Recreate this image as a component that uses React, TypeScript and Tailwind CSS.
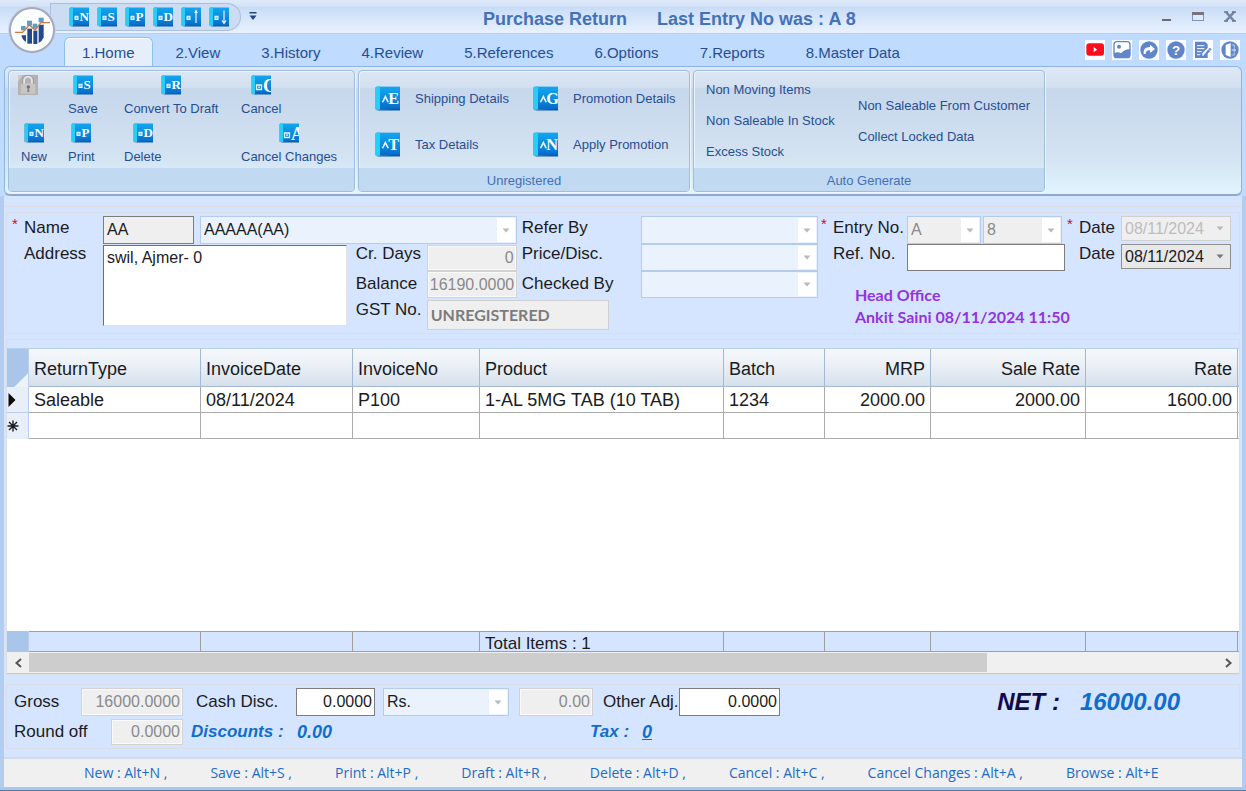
import type { ReactNode } from "react";
import { clsx } from "clsx";

const tabs = [
  "1.Home",
  "2.View",
  "3.History",
  "4.Review",
  "5.References",
  "6.Options",
  "7.Reports",
  "8.Master Data",
];

const shortcuts = [
  "New : Alt+N ,",
  "Save : Alt+S ,",
  "Print : Alt+P ,",
  "Draft : Alt+R ,",
  "Delete : Alt+D ,",
  "Cancel : Alt+C ,",
  "Cancel Changes : Alt+A ,",
  "Browse : Alt+E",
];

const columns = [
  { title: "ReturnType", value: "Saleable", width: "w-[172px]" },
  { title: "InvoiceDate", value: "08/11/2024", width: "w-[152px]" },
  { title: "InvoiceNo", value: "P100", width: "w-[127px]" },
  { title: "Product", value: "1-AL 5MG TAB (10 TAB)", width: "" },
  { title: "Batch", value: "1234", width: "w-[101px]" },
  { title: "MRP", value: "2000.00", width: "w-[106px]", numeric: true },
  { title: "Sale Rate", value: "2000.00", width: "w-[155px]", numeric: true },
  { title: "Rate", value: "1600.00", width: "w-[152px]", numeric: true },
];

interface BookIconProps {
  letter: string;
  caret?: boolean;
  large?: boolean;
  className?: string;
}

function BookIcon({ letter, caret, large, className = "size-5" }: BookIconProps) {
  return (
    <svg viewBox="0 0 20 20" className={clsx("shrink-0", className)} aria-hidden="true">
      <defs>
        <linearGradient id="cover" x1="0" y1="0" x2="0" y2="1">
          <stop offset="0" stopColor="#12a6ee" />
          <stop offset="0.6" stopColor="#0b87dd" />
          <stop offset="1" stopColor="#0667c4" />
        </linearGradient>
      </defs>
      <rect x="1" y="0.5" width="19" height="18.5" fill="url(#cover)" />
      <path d="M0.5 1 L4 0 V19 H0.5 Z" fill="#25cdf7" />
      <path d="M0.3 1 V18.5" stroke="#5aa0c8" strokeWidth="0.6" />
      <path d="M4 19 L20 18 V19.5 H1 Z" fill="#0a5cab" />
      {caret ? (
        <path d="M6 13 L8.3 8.5 L10.6 13" fill="none" stroke="#e8f6ff" strokeWidth="1.3" />
      ) : large ? (
        <path d="M5.5 10 h5 v4.5 h-5 z M7 12.2 h2" fill="none" stroke="#e8f6ff" strokeWidth="1.3" />
      ) : (
        <path d="M6 9.2 h3 v3.3 h-3 z" fill="#7fc8f5" stroke="#e8f6ff" strokeWidth="1.1" />
      )}
      {letter === "up" && (
        <path d="M15 3.5 V16 M13.8 6 L15 3.5 L16.2 6" fill="none" stroke="#fff" strokeWidth="1.1" />
      )}
      {letter === "down" && (
        <path d="M15 3.5 V15 M13 13.5 L15 16.5 L17 13.5" fill="none" stroke="#fff" strokeWidth="1.1" />
      )}
      {letter.length === 1 && (
        <text
          x={large ? 12 : 10.5}
          y={large ? 17 : 14}
          fill="#fff"
          className={clsx(
            "font-['Liberation_Serif',serif] font-bold",
            large ? "text-[18px]" : "text-[13px]"
          )}
        >
          {letter}
        </text>
      )}
    </svg>
  );
}

function AppLogo() {
  return (
    <svg viewBox="27 21 138 138" className="size-[46px] shrink-0" aria-hidden="true">
      <g fill="#24488c">
        <path d="M65 106 h13 v20 q-8 -4 -13 -16 z" />
        <rect x="82" y="86" width="14" height="45" />
        <rect x="100" y="92" width="12" height="40" />
        <path d="M116 74 h15 v38 q-4 11 -15 17 z" />
      </g>
      <g fill="#5f9fc4">
        <rect x="63" y="78" width="14" height="13" />
        <rect x="81" y="62" width="15" height="15" />
        <rect x="98" y="71" width="14" height="15" />
        <rect x="116" y="53" width="15" height="14" />
      </g>
      <path d="M45 97 H68 L88 75 L105 90 L123 68 H150" fill="none" stroke="#cf7a45" strokeWidth="4" />
    </svg>
  );
}

function UtilityButton({ label, children }: { label: string; children: ReactNode }) {
  return (
    <button type="button" aria-label={label} className="size-5 bg-white/90">
      <svg viewBox="0 0 60 60" className="size-5" fill="#5f86ca">
        {children}
      </svg>
    </button>
  );
}

function UtilityBar() {
  return (
    <div className="flex gap-[7px] self-center">
      <UtilityButton label="Video">
        <rect x="4" y="10" width="53" height="37" rx="9" fill="#fb0d1b" />
        <path d="M26 21 L37 29 L26 36 Z" fill="#fff" />
      </UtilityButton>
      <UtilityButton label="Picture">
        <rect x="6" y="5" width="48" height="48" rx="9" fill="#fff" stroke="#5f86ca" strokeWidth="4" />
        <circle cx="21" cy="20" r="6" />
        <path d="M6 40 Q18 34 27 40 Q40 26 54 28 V46 Q54 54 45 54 H14 Q6 54 6 46 Z" />
      </UtilityButton>
      <UtilityButton label="Share">
        <circle cx="30" cy="30" r="26" />
        <path d="M14 42 Q11 21 33 21 V14 L48 27 L33 39 V31 Q20 30 20 42 Z" fill="#fff" />
      </UtilityButton>
      <UtilityButton label="Help">
        <circle cx="30" cy="30" r="26" />
        <text
          x="30"
          y="44"
          textAnchor="middle"
          fill="#fff"
          className="font-['Liberation_Sans',sans-serif] text-[40px] font-bold"
        >
          ?
        </text>
      </UtilityButton>
      <UtilityButton label="Notes">
        <path d="M6 5 H36 L44 13 V24 L28 40 V47 H36 L44 42 V54 H6 Z" />
        <path d="M12 17 H34 M12 26 H34 M12 35 H26 M12 44 H22" stroke="#fff" strokeWidth="3" />
        <path d="M33 44 L50 23 L56 28 L39 47 L31 49 Z" />
        <path d="M46 28 L52 33" stroke="#fff" strokeWidth="2" />
      </UtilityButton>
      <UtilityButton label="Exit">
        <circle cx="30" cy="30" r="26" />
        <path d="M17 15 L32 9 V51 L17 45 Z" fill="#fff" />
        <path d="M35 15 H43 V23 M43 37 V45 H35" fill="none" stroke="#b9cdec" strokeWidth="3" />
        <path d="M35 30 H46 M41 25 L47 30 L41 35" fill="none" stroke="#dfe9f8" strokeWidth="3" />
      </UtilityButton>
    </div>
  );
}

function TitleBar() {
  const quick = ["N", "S", "P", "D", "up", "down"];
  return (
    <header className="relative flex h-[33px] items-center bg-[linear-gradient(#dfeafb_0,#d5e3f8_6px,#c9dcf6_7px,#e7f1ff_32px)]">
      <button
        type="button"
        aria-label="Application menu"
        className="absolute top-[7px] left-[9px] z-10 flex size-[46px] items-center justify-center rounded-full border-2 border-[#a3abbc] bg-[#fcfdff] shadow-[inset_0_0_0_1px_#fff,0_0_0_1px_#c9d6ea]"
      >
        <AppLogo />
      </button>
      <div className="ml-[50px] flex h-[28px] items-center gap-2 rounded-tl-lg rounded-r-full border border-[#a9bfe0] bg-[#cbdcf3] pr-[11px] pl-[18px]">
        {quick.map((letter) => (
          <button type="button" key={letter} aria-label={letter}>
            <BookIcon letter={letter} />
          </button>
        ))}
      </div>
      <button type="button" aria-label="Customize toolbar" className="ml-2">
        <svg viewBox="0 0 8 9" className="h-[9px] w-2" fill="#1f4687">
          <rect x="0.5" y="0" width="7" height="1.5" />
          <path d="M0.5 3.5 H7.5 L4 8 Z" />
        </svg>
      </button>
      <h1 className="ml-[226px] pt-1 text-lg font-bold whitespace-pre text-[#4472b9]">
        Purchase Return{"      "}Last Entry No was : A 8
      </h1>
      <div className="mr-[10px] ml-auto flex items-center gap-5">
        <button type="button" aria-label="Minimize">
          <svg viewBox="0 0 11 11" className="size-[11px]">
            <rect x="1" y="8" width="9" height="2" fill="#6b6b70" />
          </svg>
        </button>
        <button type="button" aria-label="Maximize">
          <svg viewBox="0 0 12 11" className="h-[11px] w-3">
            <rect x="0.5" y="1.5" width="11" height="8" fill="#dfe9f8" stroke="#7d95bd" />
            <rect x="0" y="1" width="12" height="3" fill="#77747f" />
          </svg>
        </button>
        <button type="button" aria-label="Close">
          <svg viewBox="0 0 12 11" className="h-[11px] w-3">
            <path d="M2 1 L10 10 M10 1 L2 10" stroke="#7186ab" strokeWidth="2.6" />
            <path d="M0 1 H4 M8 1 H12 M0 10 H4 M8 10 H12" stroke="#75757f" strokeWidth="1.4" />
          </svg>
        </button>
      </div>
    </header>
  );
}

function TabStrip() {
  return (
    <nav className="flex h-[33px] items-end border-t border-[#b3d0f8] bg-[#bfdbff] pr-[6px] pl-[64px] text-[15px] text-[#274e92]">
      <div className="flex flex-1 items-end gap-[5px]">
        {tabs.map((tab, i) => (
          <button
            type="button"
            key={tab}
            className={clsx(
              "h-[29px] border border-b-0 px-[17px] pt-[3px]",
              i === 0
                ? "rounded-t-md border-[#8fc0ee] bg-[#e6eefa] shadow-[inset_0_1px_0_#fff]"
                : "border-transparent"
            )}
          >
            {tab}
          </button>
        ))}
      </div>
      <UtilityBar />
    </nav>
  );
}

function RibbonGroup({
  caption,
  className,
  children,
}: {
  caption?: string;
  className: string;
  children: ReactNode;
}) {
  return (
    <section
      className={clsx(
        "flex flex-col overflow-hidden rounded border border-[#9fbddd] shadow-[1px_1px_0_#eef6fd,inset_1px_1px_0_#eaf2fb]",
        className
      )}
    >
      <div className="flex-1">{children}</div>
      <div className="h-[23px] bg-[#c1d9f1] pt-px text-center text-[13px] leading-6 text-[#4470b3]">{caption}</div>
    </section>
  );
}

function CommandButton({ letter, label, large }: { letter: string; label: string; large?: boolean }) {
  return (
    <button type="button" className="flex flex-col items-center gap-1 justify-self-start leading-5">
      <BookIcon letter={letter} large={large} />
      {label}
    </button>
  );
}

function DetailButton({ letter, label }: { letter: string; label: string }) {
  return (
    <button type="button" className="flex items-center gap-[15px]">
      <BookIcon letter={letter} caret className="size-[25px]" />
      {label}
    </button>
  );
}

function Ribbon() {
  return (
    <div className="mx-1 flex h-[130px] gap-[3px] rounded-md border border-b-2 border-[#8db4e3] border-b-[#8fa9cd] bg-[linear-gradient(#dfe8f5_0,#d3e0f0_20px,#c7d7ec_22px,#d3e3f2_90px,#e1f4fe_126px)] pt-[3px] pr-1 pb-[2px] pl-[3px] text-[13px] text-[#274e92]">
      <RibbonGroup className="w-[347px]">
        <div className="grid grid-cols-[47px_56px_117px_auto] gap-y-1 pt-1 pl-3">
          <button type="button" aria-label="Lock" className="ml-[-3px] size-5">
            <svg viewBox="0 0 60 60" className="size-5">
              <rect width="60" height="60" fill="#b4b2b0" />
              <path d="M0 60 V20 L14 0 H0 Z" fill="#cfcdca" />
              <path d="M18 28 V16 Q18 5 30 5 Q42 5 42 16 V28" fill="none" stroke="#e4e4e4" strokeWidth="6" />
              <path d="M14 28 V14 Q18 1 30 1 Q42 1 46 14 V28" fill="none" stroke="#8c8c8c" strokeWidth="2" />
              <path d="M8 28 Q30 22 52 28 V56 H8 Z" fill="#c8c6c4" />
              <circle cx="31" cy="36" r="5" fill="#6d6d6d" />
              <path d="M29 38 H33 L35 51 H27 Z" fill="#8a8a8a" />
            </svg>
          </button>
          <CommandButton letter="S" label="Save" />
          <CommandButton letter="R" label="Convert To Draft" />
          <CommandButton letter="C" label="Cancel" large />
          <CommandButton letter="N" label="New" />
          <CommandButton letter="P" label="Print" />
          <CommandButton letter="D" label="Delete" />
          <CommandButton letter="A" label="Cancel Changes" large />
        </div>
      </RibbonGroup>
      <RibbonGroup caption="Unregistered" className="w-[332px]">
        <div className="grid grid-cols-[158px_auto] justify-start gap-y-[21px] pt-[15px] pl-4">
          <DetailButton letter="E" label="Shipping Details" />
          <DetailButton letter="G" label="Promotion Details" />
          <DetailButton letter="T" label="Tax Details" />
          <DetailButton letter="N" label="Apply Promotion" />
        </div>
      </RibbonGroup>
      <RibbonGroup caption="Auto Generate" className="w-[352px]">
        <div className="flex pl-3 leading-5">
          <div className="flex w-[152px] flex-col items-start gap-[11px] pt-[9px]">
            <button type="button">Non Moving Items</button>
            <button type="button">Non Saleable In Stock</button>
            <button type="button">Excess Stock</button>
          </div>
          <div className="flex flex-col items-start gap-[11px] pt-[25px]">
            <button type="button">Non Saleable From Customer</button>
            <button type="button">Collect Locked Data</button>
          </div>
        </div>
      </RibbonGroup>
    </div>
  );
}

function FieldLabel({ htmlFor, required, children }: { htmlFor: string; required?: boolean; children: ReactNode }) {
  return (
    <label
      htmlFor={htmlFor}
      className={clsx("flex text-[17px] whitespace-nowrap", required ? "leading-6" : "leading-5")}
    >
      <span className="w-3 shrink-0 text-[15px] leading-4 text-red-600">{required && "*"}</span>
      {children}
    </label>
  );
}

interface ComboProps {
  id: string;
  value?: string;
  tone?: "blue" | "gray" | "date" | "dateOff";
  className?: string;
}

function Combo({ id, value = "", tone = "blue", className = "" }: ComboProps) {
  const date = tone === "date" || tone === "dateOff";
  return (
    <div className={clsx("relative", className)}>
      <select
        id={id}
        aria-label={id}
        defaultValue={value}
        className={clsx(
          "block size-full appearance-none border pl-[3px] text-base",
          tone === "blue" && "border-[#b4cbe9] bg-[#eaf2fd] text-[#1b1b22]",
          tone === "gray" && "border-[#b4cbe9] bg-[#efefef] text-[#8a8a8a]",
          tone === "date" && "border-[#8f8f8f] bg-[#e8e8e8] text-[#1b1b22]",
          tone === "dateOff" && "border-[#cfcfcf] bg-[#efefef] text-[#bdbdbd]"
        )}
      >
        <option value={value}>{value}</option>
      </select>
      <span
        className={clsx(
          "pointer-events-none absolute inset-y-[2px] right-[2px] flex w-[18px] items-center justify-center",
          !date && "bg-white"
        )}
      >
        <svg viewBox="0 0 8 5" className="h-[5px] w-2" fill={tone === "date" ? "#777" : "#b9b9b9"}>
          <path d="M0.5 0.5 H7.5 L4 4.5 Z" />
        </svg>
      </span>
    </div>
  );
}

interface BoxProps {
  id: string;
  value?: string;
  off?: boolean;
  className?: string;
}

function Box({ id, value = "", off, className = "" }: BoxProps) {
  return (
    <input
      id={id}
      aria-label={id}
      defaultValue={value}
      readOnly={off}
      className={clsx(
        "min-w-0 border px-[2px] text-base",
        off
          ? "border-[#d2d2d2] bg-[#efefef] text-[#8a8a8a] shadow-[inset_0_0_0_1px_#fafafa]"
          : "border-[#7d7d7d] bg-white text-[#1b1b22]",
        className
      )}
    />
  );
}

function EntryForm() {
  return (
    <section className="flex h-[122px] justify-between border border-[#dadde6] pt-[3px] pr-2 pl-[5px]">
      <div className="grid w-[806px] grow grid-cols-[91px_minmax(0,11fr)_80px_90px_124px_minmax(0,8fr)] grid-rows-[28px_27px_27px_32px] content-start">
        <FieldLabel htmlFor="name" required>
          Name
        </FieldLabel>
        <div className="col-span-3 flex gap-[6px]">
          <input
            id="name"
            defaultValue="AA"
            className="w-[91px] border border-[#7d7d7d] bg-[#efefef] px-[3px] text-base"
          />
          <Combo id="party" value="AAAAA(AA)" className="flex-1" />
        </div>
        <label htmlFor="refer" className="pl-[5px] text-[17px] leading-6">
          Refer By
        </label>
        <Combo id="refer" />
        <FieldLabel htmlFor="address">Address</FieldLabel>
        <textarea
          id="address"
          defaultValue="swil, Ajmer- 0"
          className="row-span-3 mt-px mb-1 resize-none border border-t-[#6f6f6f] border-r-[#e3e3e3] border-b-[#e3e3e3] border-l-[#6f6f6f] bg-white px-[3px] text-base leading-6"
        />
        <label htmlFor="days" className="pl-[9px] text-[17px] leading-5">
          Cr. Days
        </label>
        <Box id="days" value="0" off className="mt-px text-right" />
        <label htmlFor="price" className="pl-[5px] text-[17px] leading-5">
          Price/Disc.
        </label>
        <Combo id="price" />
        <label htmlFor="balance" className="col-start-3 pl-[9px] text-[17px] leading-[26px]">
          Balance
        </label>
        <Box id="balance" value="16190.0000" off className="text-right" />
        <label htmlFor="checked" className="pl-[5px] text-[17px] leading-[26px]">
          Checked By
        </label>
        <Combo id="checked" />
        <label htmlFor="gst" className="col-start-3 pl-[9px] text-[17px] leading-6">
          GST No.
        </label>
        <input
          id="gst"
          readOnly
          defaultValue="UNREGISTERED"
          className="col-span-2 mt-[2px] mr-8 border border-[#cfcfcf] bg-[#efefef] px-[3px] font-['Lato','Open_Sans',sans-serif] text-base font-bold text-[#7c7c7c]"
        />
      </div>
      <div className="ml-[3px] w-[410px]">
        <div className="grid grid-cols-[86px_160px_54px_110px] grid-rows-[28px_27px]">
          <FieldLabel htmlFor="entry" required>
            Entry No.
          </FieldLabel>
          <div className="flex gap-[2px]">
            <Combo id="entry" value="A" tone="gray" className="w-[74px]" />
            <Combo id="entry number" value="8" tone="gray" className="w-[79px]" />
          </div>
          <FieldLabel htmlFor="entry date" required>
            Date
          </FieldLabel>
          <Combo id="entry date" value="08/11/2024" tone="dateOff" className="mb-[3px]" />
          <FieldLabel htmlFor="reference">Ref. No.</FieldLabel>
          <Box id="reference" className="mr-[2px]" />
          <FieldLabel htmlFor="reference date">Date</FieldLabel>
          <Combo id="reference date" value="08/11/2024" tone="date" className="mb-[2px]" />
        </div>
        <p className="mt-[13px] ml-[34px] font-['Lato','Open_Sans',sans-serif] text-base leading-[22px] font-bold text-[#9333e0]">
          Head Office
          <br />
          Ankit Saini 08/11/2024 11:50
        </p>
      </div>
    </section>
  );
}

function GridColumns() {
  return (
    <colgroup>
      <col className="w-[22px]" />
      {columns.map((col) => (
        <col key={col.title} className={col.width} />
      ))}
      <col className="w-px" />
    </colgroup>
  );
}

function ItemsGrid() {
  const cell = "border-r border-b border-[#ababab] px-[5px]";
  return (
    <section className="mt-[5px] flex flex-1 flex-col border border-[#dadde6] pt-2">
      <div className="flex flex-1 flex-col border-y border-[#b7cfec] bg-white">
        <table className="w-full table-fixed border-separate border-spacing-0 text-left text-lg">
          <GridColumns />
          <thead>
            <tr className="h-[38px] bg-[linear-gradient(#f6f9fb,#e8eef5_50%,#d5dfeb)]">
              <th className="border-r border-[#b7cfec] bg-[linear-gradient(135deg,#a9c5ea_76%,#eef3f9_77%)]" />
              {columns.map((col) => (
                <th
                  key={col.title}
                  className={clsx(
                    "border-r border-b border-[#a3b9d3] px-[5px] pt-[2px] font-normal",
                    col.numeric && "text-right"
                  )}
                >
                  {col.title}
                </th>
              ))}
              <th className="border-b border-[#a3b9d3]" />
            </tr>
          </thead>
          <tbody>
            <tr className="h-[26px]">
              <td className="border-r border-b border-[#b7cfec] bg-[#e8eff8] pl-px">
                <svg viewBox="0 0 8 14" className="h-[14px] w-2">
                  <path d="M0.5 0 L7.5 7 L0.5 14 Z" fill="#0c0c0c" />
                </svg>
              </td>
              {columns.map((col) => (
                <td key={col.title} className={clsx(cell, "leading-5", col.numeric && "text-right")}>
                  {col.value}
                </td>
              ))}
              <td className="border-b border-[#ababab]" />
            </tr>
            <tr className="h-[26px]">
              <td className="border-r border-[#b7cfec] bg-[#e8eff8]">
                <svg viewBox="0 0 12 12" className="size-3">
                  <path
                    d="M6 0.5 V11.5 M0.5 6 H11.5 M2 2 L10 10 M10 2 L2 10"
                    stroke="#1b1b22"
                    strokeWidth="1.4"
                  />
                </svg>
              </td>
              {columns.map((col) => (
                <td key={col.title} className={cell} />
              ))}
              <td className="border-b border-[#ababab]" />
            </tr>
          </tbody>
        </table>
        <div className="flex-1" />
        <table className="w-full table-fixed border-separate border-spacing-0 text-[17px]">
          <GridColumns />
          <tbody>
            <tr className="h-[21px] bg-[#d6e5ff]">
              <td className="border-r border-[#b7cfec] bg-[#a9c5ea]" />
              {columns.map((col) => (
                <td key={col.title} className="border-y border-r border-[#a0a0a0] px-[5px] whitespace-nowrap">
                  {col.title === "Product" && <div className="h-[19px] leading-6">Total Items : 1</div>}
                </td>
              ))}
              <td className="border-y border-[#a0a0a0]" />
            </tr>
          </tbody>
        </table>
        <div className="flex h-[21px] items-center bg-[#f0f0f0]">
          <button type="button" aria-label="Scroll left" className="flex w-[22px] justify-center">
            <svg viewBox="0 0 8 10" className="h-[10px] w-2">
              <path d="M7 1 L2.5 5 L7 9" fill="none" stroke="#55565c" strokeWidth="2" />
            </svg>
          </button>
          <div className="flex-1">
            <div className="h-[19px] w-[80.5%] bg-[#cdcdcd]" />
          </div>
          <button type="button" aria-label="Scroll right" className="flex w-[20px] justify-center">
            <svg viewBox="0 0 8 10" className="h-[10px] w-2">
              <path d="M1 1 L5.5 5 L1 9" fill="none" stroke="#55565c" strokeWidth="2" />
            </svg>
          </button>
        </div>
      </div>
    </section>
  );
}

function Totals() {
  return (
    <section className="mt-[9px] border border-[#dadde6] py-[2px] pr-[59px] pl-[7px] text-[17px] whitespace-nowrap">
      <div className="flex h-[30px] items-center">
        <label htmlFor="gross" className="w-[67px]">
          Gross
        </label>
        <Box id="gross" value="16000.0000" off className="h-7 w-[102px] text-right" />
        <label htmlFor="cash" className="ml-[13px] w-[100px]">
          Cash Disc.
        </label>
        <Box id="cash" value="0.0000" className="h-7 w-[79px] text-right" />
        <Combo id="unit" value="Rs." className="ml-2 h-7 w-[126px]" />
        <Box id="discount amount" value="0.00" off className="ml-[10px] h-7 w-[74px] text-right" />
        <label htmlFor="adjust" className="ml-[10px] w-[76px]">
          Other Adj.
        </label>
        <Box id="adjust" value="0.0000" className="h-7 w-[101px] text-right" />
        <strong className="ml-auto text-2xl text-[#120b4a] italic">NET :</strong>
        <strong className="ml-5 text-2xl text-[#0f6dce] italic">16000.00</strong>
      </div>
      <div className="flex h-[29px] items-center">
        <label htmlFor="round" className="w-[97px]">
          Round off
        </label>
        <Box id="round" value="0.0000" off className="h-[26px] w-[72px] text-right" />
        <strong className="ml-2 w-[106px] text-[#0f6dce] italic">Discounts :</strong>
        <strong className="w-[293px] text-lg text-[#0f6dce] italic">0.00</strong>
        <strong className="w-[52px] text-[#0f6dce] italic">Tax :</strong>
        <a href="#tax" className="text-lg font-bold text-[#0f6dce] italic underline">
          0
        </a>
      </div>
    </section>
  );
}

export default function App() {
  return (
    <div className="flex min-h-screen flex-col bg-[#bfdbff] font-['Liberation_Sans',Arial,sans-serif] text-[#1b1b22]">
      <TitleBar />
      <TabStrip />
      <Ribbon />
      <main className="flex flex-1 flex-col border-x-4 border-[#b3cdf0] bg-[#d6e5ff]">
        <div className="h-[11px] border-b border-[#dadde6]" />
        <div className="flex flex-1 flex-col px-[2px] pt-[5px] pb-2">
          <EntryForm />
          <ItemsGrid />
          <Totals />
        </div>
        <footer className="flex h-[30px] items-center gap-[43px] border-t-2 border-[#d5dbe6] bg-[#f0f0f0] pl-20 font-['Open_Sans','Noto_Sans',sans-serif] text-sm whitespace-nowrap text-[#1b6cc9]">
          {shortcuts.map((item) => (
            <span key={item}>{item}</span>
          ))}
        </footer>
      </main>
      <div className="h-1 border-b border-[#56799f] bg-[#a9c8f0]" />
    </div>
  );
}
